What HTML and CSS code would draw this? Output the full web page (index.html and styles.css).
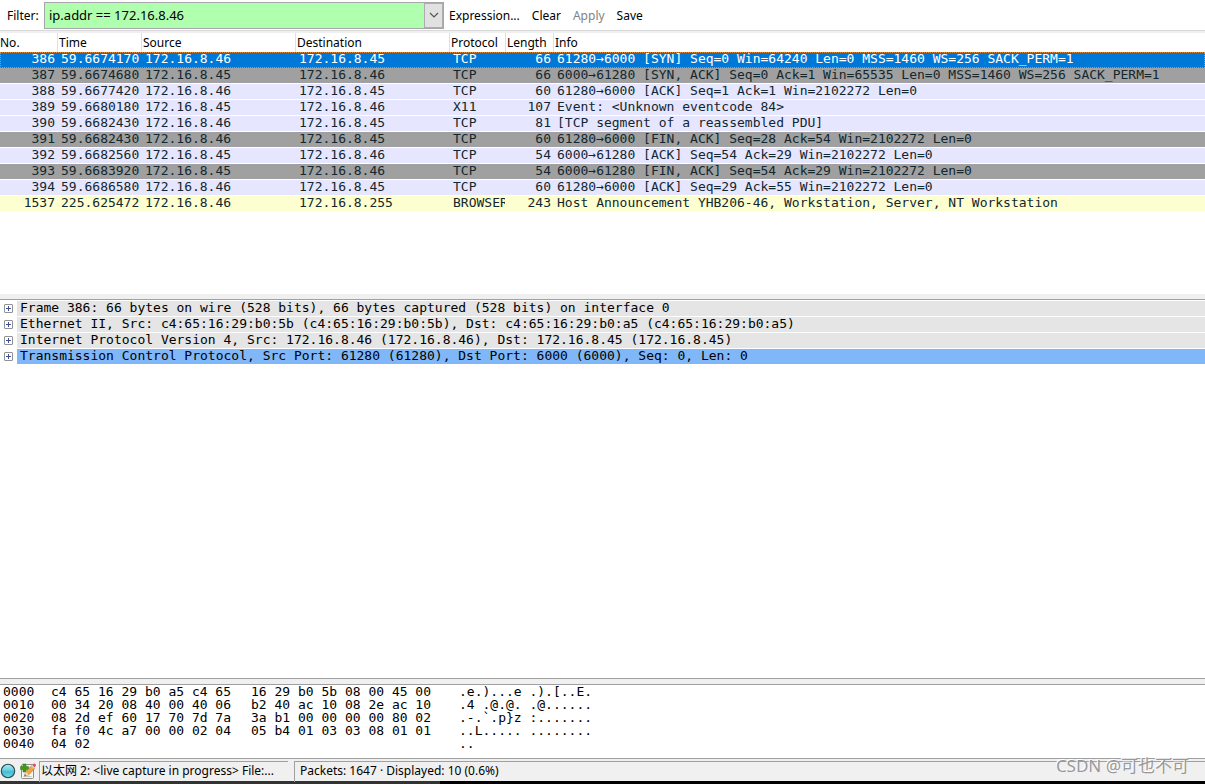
FILE: index.html
```html
<!DOCTYPE html>
<html lang="zh-CN">
<head>
    <meta charset="UTF-8">
    <meta name="viewport" content="width=device-width, initial-scale=1.0">
    <title>Packet capture</title>
    <link rel="stylesheet" href="styles.css">
</head>
<body>
    <form class="filter-bar">
        <label for="filter">Filter:</label>
        <div class="combo">
            <input id="filter" type="text" value="ip.addr == 172.16.8.46" spellcheck="false">
            <button type="button" class="combo-arrow" aria-label="Recent filters">
                <svg width="10" height="6" viewBox="0 0 10 6"><path d="M1 1l4 4 4-4" fill="none" stroke="#555" stroke-width="1.2"/></svg>
            </button>
        </div>
        <button type="button" class="link-button">Expression...</button>
        <button type="button" class="link-button">Clear</button>
        <button type="button" class="link-button" disabled>Apply</button>
        <button type="button" class="link-button">Save</button>
    </form>

    <section class="packet-list">
        <table>
            <colgroup>
                <col class="col-no"><col class="col-time"><col class="col-addr"><col class="col-addr">
                <col class="col-proto"><col class="col-len"><col>
            </colgroup>
            <thead>
                <tr><th>No.</th><th>Time</th><th>Source</th><th>Destination</th><th>Protocol</th><th>Length</th><th>Info</th></tr>
            </thead>
            <tbody>
                <tr class="selected"><td class="num">386</td><td>59.6674170</td><td>172.16.8.46</td><td>172.16.8.45</td><td>TCP</td><td class="num">66</td><td>61280→6000 [SYN] Seq=0 Win=64240 Len=0 MSS=1460 WS=256 SACK_PERM=1</td></tr>
                <tr class="syn"><td class="num">387</td><td>59.6674680</td><td>172.16.8.45</td><td>172.16.8.46</td><td>TCP</td><td class="num">66</td><td>6000→61280 [SYN, ACK] Seq=0 Ack=1 Win=65535 Len=0 MSS=1460 WS=256 SACK_PERM=1</td></tr>
                <tr class="tcp"><td class="num">388</td><td>59.6677420</td><td>172.16.8.46</td><td>172.16.8.45</td><td>TCP</td><td class="num">60</td><td>61280→6000 [ACK] Seq=1 Ack=1 Win=2102272 Len=0</td></tr>
                <tr class="tcp"><td class="num">389</td><td>59.6680180</td><td>172.16.8.45</td><td>172.16.8.46</td><td>X11</td><td class="num">107</td><td>Event: &lt;Unknown eventcode 84&gt;</td></tr>
                <tr class="tcp"><td class="num">390</td><td>59.6682430</td><td>172.16.8.46</td><td>172.16.8.45</td><td>TCP</td><td class="num">81</td><td>[TCP segment of a reassembled PDU]</td></tr>
                <tr class="syn"><td class="num">391</td><td>59.6682430</td><td>172.16.8.46</td><td>172.16.8.45</td><td>TCP</td><td class="num">60</td><td>61280→6000 [FIN, ACK] Seq=28 Ack=54 Win=2102272 Len=0</td></tr>
                <tr class="tcp"><td class="num">392</td><td>59.6682560</td><td>172.16.8.45</td><td>172.16.8.46</td><td>TCP</td><td class="num">54</td><td>6000→61280 [ACK] Seq=54 Ack=29 Win=2102272 Len=0</td></tr>
                <tr class="syn"><td class="num">393</td><td>59.6683920</td><td>172.16.8.45</td><td>172.16.8.46</td><td>TCP</td><td class="num">54</td><td>6000→61280 [FIN, ACK] Seq=54 Ack=29 Win=2102272 Len=0</td></tr>
                <tr class="tcp"><td class="num">394</td><td>59.6686580</td><td>172.16.8.46</td><td>172.16.8.45</td><td>TCP</td><td class="num">60</td><td>61280→6000 [ACK] Seq=29 Ack=55 Win=2102272 Len=0</td></tr>
                <tr class="smb"><td class="num">1537</td><td>225.625472</td><td>172.16.8.46</td><td>172.16.8.255</td><td>BROWSER</td><td class="num">243</td><td>Host Announcement YHB206-46, Workstation, Server, NT Workstation</td></tr>
            </tbody>
        </table>
    </section>

    <div class="splitter"></div>

    <ul class="packet-tree">
        <li><button type="button" class="expander" aria-label="Expand frame"></button><span>Frame 386: 66 bytes on wire (528 bits), 66 bytes captured (528 bits) on interface 0</span></li>
        <li><button type="button" class="expander" aria-label="Expand Ethernet"></button><span>Ethernet II, Src: c4:65:16:29:b0:5b (c4:65:16:29:b0:5b), Dst: c4:65:16:29:b0:a5 (c4:65:16:29:b0:a5)</span></li>
        <li><button type="button" class="expander" aria-label="Expand IP"></button><span>Internet Protocol Version 4, Src: 172.16.8.46 (172.16.8.46), Dst: 172.16.8.45 (172.16.8.45)</span></li>
        <li class="active"><button type="button" class="expander" aria-label="Expand TCP"></button><span>Transmission Control Protocol, Src Port: 61280 (61280), Dst Port: 6000 (6000), Seq: 0, Len: 0</span></li>
    </ul>

    <div class="splitter framed"></div>

    <div class="hex-dump">
        <pre>
0000
0010
0020
0030
0040</pre>
        <pre>
c4 65 16 29 b0 a5 c4 65
00 34 20 08 40 00 40 06
08 2d ef 60 17 70 7d 7a
fa f0 4c a7 00 00 02 04
04 02</pre>
        <pre>
16 29 b0 5b 08 00 45 00
b2 40 ac 10 08 2e ac 10
3a b1 00 00 00 00 80 02
05 b4 01 03 03 08 01 01</pre>
        <pre>
.e.)...e .).[..E.
.4 .@.@. .@......
.-.`.p}z :.......
..L..... ........
..</pre>
    </div>

    <footer class="status-bar">
        <svg class="status-icon" width="16" height="16" viewBox="0 0 16 16">
            <defs>
                <linearGradient id="ball" x1="0" y1="0" x2="0" y2="1">
                    <stop offset="0" stop-color="#b5ecf2"/>
                    <stop offset="0.45" stop-color="#62cfdf"/>
                    <stop offset="0.55" stop-color="#3fbfd4"/>
                    <stop offset="1" stop-color="#74dbe6"/>
                </linearGradient>
            </defs>
            <circle cx="8" cy="8" r="6.7" fill="url(#ball)" stroke="#2c4a52" stroke-width="1.1"/>
        </svg>
        <svg class="status-icon" width="16" height="16" viewBox="0 0 16 16">
            <rect x="1.5" y="1.5" width="12" height="14" rx="1" fill="#f4f4f2" stroke="#8d8d8a"/>
            <path d="M3.5 13.5h8" stroke="#c4c4c0"/>
            <path d="M3 1h3v2.500h2.500v3H6V9H3V6.500H.5v-3H3z" fill="#3f9a16" stroke="#2b7410" stroke-width=".5"/>
            <path d="M4.500 13l1.200-4.300 6-6 3 2.800-6 6.300z" fill="#f2a545" stroke="#9c602a" stroke-width=".6"/>
            <path d="M4.500 13l1.200-4.300 3 3.100z" fill="#f5dfb8"/>
            <path d="M4.500 13l.5-1.800 1.200 1.100z" fill="#333"/>
            <path d="M12.300 2.100L13.600.700q.6-.5 1.300.1l.8.800q.5.700 0 1.300l-1.100 1.500z" fill="#e05050"/>
            <path d="M11.100 3.300l1.200-1.200 2.600 2.500-1.100 1.300z" fill="#c9cdd0"/>
        </svg>
        <div class="status-cell file">以太网 2: &lt;live capture in progress&gt; File:...</div>
        <div class="status-cell packets">Packets: 1647 · Displayed: 10 (0.6%)</div>
        <div class="watermark">CSDN @可也不可</div>
    </footer>
    <div class="taskbar-edge"></div>
</body>
</html>
```
FILE: styles.css
```css
* {
    box-sizing: border-box;
}

body {
    margin: 0;
    height: 100vh;
    display: grid;
    grid-template-columns: minmax(0, 1fr);
    grid-template-rows: auto minmax(0, 263fr) auto minmax(0, 378fr) auto auto auto auto;
    overflow: hidden;
    background: #fff;
    color: #000;
    font-family: "Noto Sans", "Noto Sans CJK SC", sans-serif;
    font-size: 12px;
}

button,
input {
    font: inherit;
    color: inherit;
}

/* filter bar */
.filter-bar {
    display: flex;
    align-items: center;
    height: 31px;
    padding: 0 7px;
    border-bottom: 1px solid #d8d8d8;
}

.filter-bar label {
    width: 37px;
}

.combo {
    display: flex;
    width: 400px;
    height: 27px;
    border: 1px solid #a5a5ab;
}

.combo input {
    flex: 1;
    min-width: 0;
    padding: 0 4px;
    border: 0;
    outline: 0;
    background: #afffaf;
    font-size: 13px;
}

.combo-arrow {
    display: flex;
    align-items: center;
    justify-content: center;
    width: 19px;
    padding: 0;
    border: 1px solid #adadad;
    background: #e1e1e1;
}

.link-button {
    margin-right: 12px;
    padding: 0;
    border: 0;
    background: none;
}

.combo + .link-button {
    margin-left: 5px;
}

.link-button:disabled {
    color: #838383;
}

/* packet list */
.packet-list {
    overflow: hidden;
    border-top: 2px solid #f0f0f0;
}

table {
    width: 100%;
    table-layout: fixed;
    border-collapse: separate;
    border-spacing: 0;
}

.col-no { width: 57px; }
.col-time { width: 84px; }
.col-addr { width: 154px; }
.col-proto { width: 56px; }
.col-len { width: 48px; }

th {
    height: 19px;
    padding: 0 0 0 1px;
    border-left: 1px solid #e0e0e0;
    font-weight: normal;
    line-height: 18px;
    text-align: left;
}

th:first-child {
    padding-left: 0;
    border-left: 0;
}

td {
    height: 16px;
    padding: 0 0 0 4px;
    border-bottom: 1px solid #fff;
    overflow: hidden;
    white-space: nowrap;
    line-height: 14px;
    vertical-align: top;
}

td,
.packet-tree,
.hex-dump pre {
    font-family: "DejaVu Sans Mono", monospace;
    font-size: 13px;
}

.num {
    padding: 0 2px 0 0;
    text-align: right;
}

.tcp { background: #e7e6ff; color: #12272e; }
.syn { background: #a0a0a0; color: #12272e; }
.smb { background: #feffd0; color: #12272e; }

.selected {
    background: #0078d7;
    color: #fff;
    outline: 1px dotted #e08a38;
    outline-offset: -1px;
}

.selected td {
    border-bottom-color: #0078d7;
}

.splitter {
    height: 6px;
    background: #f0f0f0;
    border-bottom: 1px solid #a0a0a0;
}

.splitter.framed {
    height: 7px;
    border-top: 1px solid #a0a0a0;
}

/* packet details */
.packet-tree {
    margin: 0;
    padding: 1px 0 0;
    list-style: none;
    overflow: hidden;
}

.packet-tree li {
    display: flex;
    height: 16px;
    padding-left: 4px;
}

.packet-tree span {
    flex: 1;
    height: 15px;
    margin-left: 4px;
    padding-left: 3px;
    background: #e5e5e5;
    line-height: 14px;
    white-space: nowrap;
}

.packet-tree .active span {
    background: #80b7f8;
}

.expander {
    width: 9px;
    height: 9px;
    margin-top: 3px;
    padding: 0;
    border: 1px solid #919191;
    border-radius: 1px;
    background:
        linear-gradient(#3b4f9e, #3b4f9e) center / 5px 1px no-repeat,
        linear-gradient(#3b4f9e, #3b4f9e) center / 1px 5px no-repeat,
        #fff;
}

/* offset, two groups of eight bytes, ascii */
.hex-dump {
    display: grid;
    grid-template-columns: 48px 200px 208px auto;
    padding: 0 3px 8px;
}

.hex-dump pre {
    margin: 0;
    line-height: 13px;
}

/* status bar */
.status-bar {
    position: relative;
    display: flex;
    align-items: center;
    height: 23px;
    padding-top: 2px;
    border-top: 1px solid #a0a0a0;
    background: #f0f0f0;
    line-height: 18px;
    white-space: nowrap;
}

.status-icon {
    margin-right: 4px;
}

.status-icon + .status-icon {
    margin-right: 3px;
}

.status-cell {
    height: 21px;
    padding-left: 1px;
    border-top: 1px solid #a0a0a0;
    border-left: 1px solid #a0a0a0;
}

.file {
    width: 249px;
    overflow: hidden;
}

.packets {
    flex: 1;
    margin-left: 6px;
    padding-left: 5px;
}

.watermark {
    position: absolute;
    right: 16px;
    bottom: 6px;
    color: #999;
    font-size: 17px;
    text-shadow: -1px -1px 0 #fff;
}

.taskbar-edge {
    height: 3px;
    background: linear-gradient(90deg, #333 440px, #000 440px);
}
```
